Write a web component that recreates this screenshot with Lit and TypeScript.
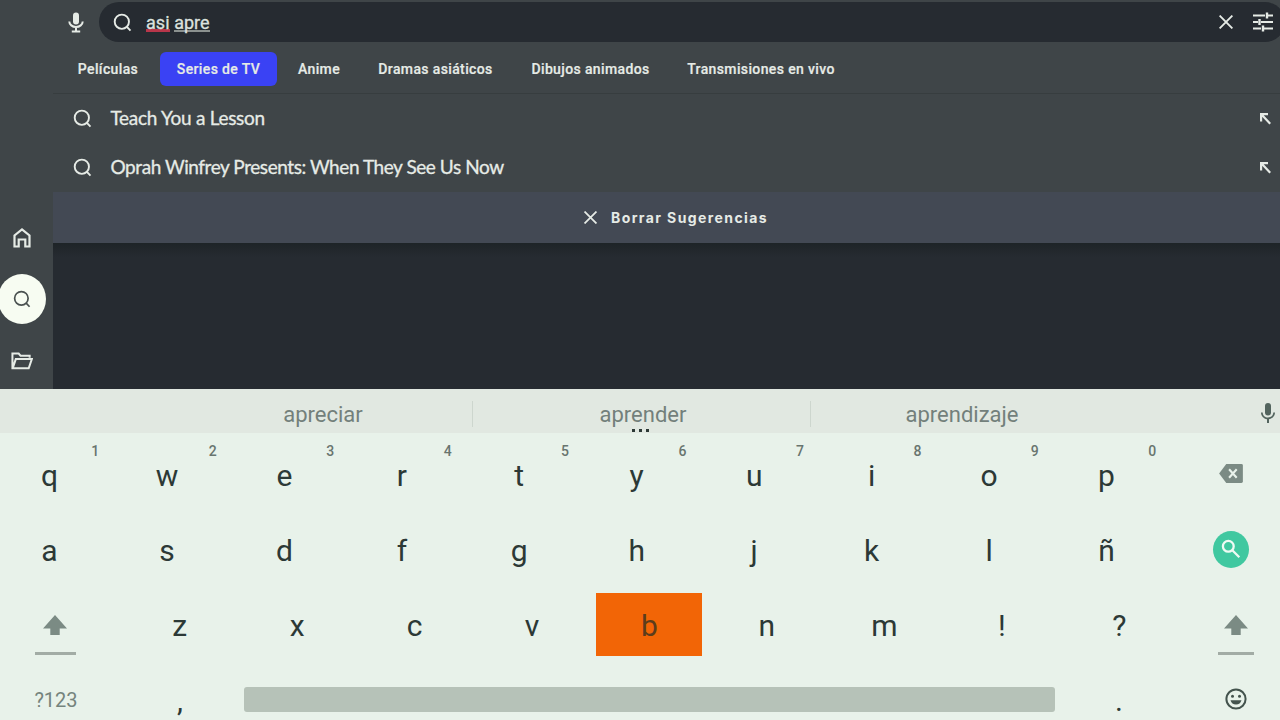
import { LitElement, html, css, nothing } from "lit";
import { customElement } from "lit/decorators.js";

const lens = (size: number, width = 2) => html`<svg width=${size} height=${size} viewBox="0 0 20 20" fill="none" stroke="currentColor" stroke-width=${width}>
  <circle cx="9.3" cy="9.2" r="7.5"></circle><path d="M14.4 14.4 18.4 18.6"></path></svg>`;

const cross = (size: number) => html`<svg width=${size} height=${size} viewBox="0 0 14 14" fill="none" stroke="currentColor" stroke-width="1.9">
  <path d="M.6 .6 13.400 13.400M13.400 .6 .6 13.400"></path></svg>`;

const mic = (w: number, h: number) => html`<svg width=${w} height=${h} viewBox="5 2 14 20" preserveAspectRatio="none" fill="currentColor">
  <path d="M12 14.5a3 3 0 0 0 3-3V5a3 3 0 0 0-6 0v6.500a3 3 0 0 0 3 3z"></path>
  <path d="M17.300 11.500c0 3-2.540 5.100-5.300 5.100s-5.300-2.100-5.300-5.100H5c0 3.410 2.720 6.230 6 6.720V22h2v-3.780c3.280-.48 6-3.300 6-6.720z"></path></svg>`;

const micWithFoot = html`<svg width="16" height="21" viewBox="0 0 16 21" fill="none" stroke="currentColor" stroke-width="2">
  <rect x="5" y=".5" width="6" height="12" rx="3" fill="currentColor" stroke="none"></rect>
  <path d="M1.300 9.500a6.700 5.500 0 0 0 13.400 0M8 15.500v4M3.800 19.400h8.400"></path></svg>`;

const shift = html`<svg class="shift-icon" width="24" height="20" viewBox="0 0 24 20" fill="currentColor"><path d="M12 0 0 13.500h7.300V20h9.400v-6.500H24z"></path></svg>`;

const northWest = html`<svg width="12" height="13" viewBox="0 0 12 13" fill="none" stroke="currentColor" stroke-width="2.200"><path d="M2.100 9.500V2.100H9M2.300 2.300 11.200 11.800"></path></svg>`;

@customElement("app-root")
export class AppRoot extends LitElement {
  static styles = css`
    :host { display: block; width: 1280px; height: 720px; overflow: hidden; font-family: Roboto, sans-serif; }
    * { box-sizing: border-box; }
    svg { display: block; flex: none; }
    .app { display: flex; flex-direction: column; height: 720px; overflow: hidden; }
    .top { display: flex; height: 389px; flex: none; background: #3f4548; color: #e6ebe6; }
    .side { width: 53px; flex: none; display: flex; flex-direction: column; align-items: center; padding: 228px 9px 0 0; }
    .nav { height: 20px; display: flex; align-items: center; }
    .nav.on { width: 48px; height: 50px; margin: 26px 0 27px; border-radius: 50%; background: #f7fcf2; color: #4a5150; justify-content: center; flex: none; }
    .main { width: 1227px; flex: none; display: flex; flex-direction: column; overflow: hidden; }
    .head { height: 42px; padding: 2px 0 0 15px; display: flex; align-items: center; flex: none; }
    .bar { margin-left: 15px; width: 1186px; height: 40px; flex: none; border-radius: 20px; background: #262b31; display: flex; align-items: center; padding-left: 14px; }
    .query { margin-left: 14px; width: 1073px; font-size: 18px; line-height: 24px; color: #dce2df; white-space: pre; padding-top: 2px; letter-spacing: .05px; -webkit-text-stroke: .3px #dce2df; }
    .word { display: inline-block; height: 20px; line-height: 22px; border-bottom: 2px solid #8b918f; }
    .word.bad { border-bottom: 3px solid #b8364a; }
    .tune { margin-left: 20px; }
    .tabs { height: 52px; border-bottom: 1px solid #373d3f; display: flex; align-items: center; padding: 2px 0 0 6px; font-size: 14px; font-weight: 500; letter-spacing: .37px; -webkit-text-stroke: .2px currentColor; flex: none; }
    .tab { height: 34px; display: flex; align-items: center; justify-content: center; border-radius: 6px; white-space: nowrap; }
    .tab.on { background: #3a42f4; }
    .row { height: 49px; display: flex; align-items: center; padding: 0 9px 0 20px; font: 400 19px/24px Lato, sans-serif; flex: none; }
    .row svg { position: relative; top: 0; }
    .title { margin: -2px 0 0 18.500px; flex: 1; white-space: nowrap; letter-spacing: -.43px; -webkit-text-stroke: .3px currentColor; }
    .row.wide .title { letter-spacing: -.28px; }
    .clear { height: 51px; background: #434954; display: flex; align-items: center; padding-left: 531px; gap: 14px; font: 700 14px/20px Inter, sans-serif; letter-spacing: 1.400px; flex: none; }
    .empty { flex: 1; background: linear-gradient(#1e2427, #262b31 14px); }
    .kb { height: 331px; background: #e8f2ea; color: #2c3936; flex: none; }
    .strip { height: 44px; background: #e1e8e1; display: flex; color: #73807b; font-size: 22px; align-items: center; position: relative; }
    .pred { display: flex; justify-content: center; height: 26px; line-height: 27px; border-right: 1px solid #cdd6ce; margin-top: 5px; }
    .pred.last { border: 0; }
    .strip-mic { color: #53645e; margin: 4px 5px 0 auto; }
    .dots { position: absolute; left: 632px; top: 40px; display: flex; gap: 4px; }
    .dot { width: 3px; height: 3px; background: #2c3936; }
    .keys { display: flex; height: 75px; margin-left: -9.200px; }
    .keys.first { margin-top: 3px; height: 75.500px; }
    .key { width: 117.450px; flex: none; display: flex; align-items: center; justify-content: center; position: relative; font-size: 30px; padding-top: 3px; }
    .hint { position: absolute; left: 94.500px; top: 6px; width: 20px; text-align: center; font-size: 14px; font-weight: 500; line-height: 18px; color: #68756f; }
    .action { width: 131px; flex: none; display: flex; align-items: center; justify-content: center; color: #7b8b84; }
    .go { width: 36px; height: 37px; border-radius: 50%; background: #40c8a0; color: #effaf3; display: flex; align-items: center; justify-content: center; }
    .keys.third { margin-left: 0; }
    .shift { width: 121px; padding-right: 11px; flex: none; display: flex; flex-direction: column; align-items: center; color: #7b8b84; }
    .shift.right { width: 102px; padding-right: 0; padding-left: 15px; }
    .shift-icon { margin-top: 28px; }
    .line { width: 41px; height: 3px; background: #a2aca5; margin-top: 17px; flex: none; }
    .right .line { width: 36px; }
    .focus { width: 106px; height: 63px; background: #f26506; display: flex; align-items: center; justify-content: center; padding-top: 3px; color: #5c3c1c; margin-top: -3px; flex: none; }
    .sym { width: 112px; padding-top: 2px; font-size: 20px; display: flex; align-items: center; justify-content: center; color: #75847d; flex: none; }
    .comma { width: 132px; padding: 2px 0 0 4px; }
    .space { width: 811px; height: 25px; border-radius: 3px; background: #b6c2b8; align-self: center; flex: none; }
    .dotkey { width: 128px; }
    .emoji { width: 107px; display: flex; align-items: center; justify-content: center; color: #43534d; }
    .emoji svg { margin-left: 9px; }
    .keys.fourth { margin-left: 0; }
  `;

  private tabs: [string, number][] = [["Películas", 98], ["Series de TV", 117], ["Anime", 84], ["Dramas asiáticos", 149], ["Dibujos animados", 161], ["Transmisiones en vivo", 180]];

  private letters(keys: string, hints = "") {
    return [...keys].map((k, i) => html`<div class="key">${k === "b" ? html`<div class="focus">b</div>` : k}${hints ? html`<span class="hint">${hints[i]}</span>` : nothing}</div>`);
  }

  render() {
    return html`<div class="app">
      <div class="top">
        <nav class="side">
          <div class="nav"><svg width="18" height="20" viewBox="0 0 18 20" fill="none" stroke="currentColor" stroke-width="2.200"><path d="M1.500 18.500V7.500L9 1.500l7.500 6v11h-4.200v-7H5.700v7z"></path></svg></div>
          <div class="nav on">${lens(18, 1.9)}</div>
          <div class="nav"><svg width="22" height="18" viewBox="0 0 23 18" fill="none" stroke="currentColor" stroke-width="2.100"><path d="M19.500 5.500V3.500H10L8 1.200H1.500v15.500h17L21.800 7H5L1.800 16.500"></path></svg></div>
        </nav>
        <div class="main">
          <div class="head">
            ${micWithFoot}
            <div class="bar">${lens(19)}
              <div class="query"><span class="word bad">asi</span> <span class="word">apre</span></div>
              ${cross(14)}
              <svg class="tune" width="20" height="20" viewBox="0 0 20 20" fill="none" stroke="currentColor" stroke-width="2"><path d="M0 3.500H12M15 3.500h5M0 10h5M8 10h12M0 16.500h8M11 16.500h9"></path><path d="M14 .500v6M6.500 7v6M10 13.500v6" stroke-width="2.400"></path></svg>
            </div>
          </div>
          <div class="tabs">${this.tabs.map(([t, w], i) => html`<div class="tab ${t === "Series de TV" ? "on" : ""}" style="width:${w}px;margin-left:${i === 1 ? 3 : 0}px">${t}</div>`)}</div>
          ${["Teach You a Lesson", "Oprah Winfrey Presents: When They See Us Now"].map((t, i) => html`<div class="row ${i ? "" : "wide"}">${lens(19)}<span class="title">${t}</span>${northWest}</div>`)}
          <div class="clear">${cross(13)}<span>Borrar Sugerencias</span></div>
          <div class="empty"></div>
        </div>
      </div>
      <div class="kb">
        <div class="strip">
          <div class="pred" style="width:473px;padding-left:174px">apreciar</div>
          <div class="pred" style="width:338px;padding-left:3px">aprender</div>
          <div class="pred last" style="width:302px">aprendizaje</div>
          <div class="strip-mic">${mic(14, 20)}</div>
          <div class="dots"><i class="dot"></i><i class="dot"></i><i class="dot"></i></div>
        </div>
        <div class="keys first">${this.letters("qwertyuiop", "1234567890")}
          <div class="action"><svg width="24" height="19" viewBox="0 0 25 20"><path d="M7.500 0H23.500Q25 0 25 1.500V18.500Q25 20 23.500 20H7.500L0 10z" fill="currentColor"></path><path d="M10.500 5.500 18.500 14.500M18.500 5.500 10.500 14.500" stroke="#e8f2ea" stroke-width="2.200"></path></svg></div>
        </div>
        <div class="keys">${this.letters("asdfghjklñ")}
          <div class="action"><div class="go"><svg width="20" height="20" viewBox="0 0 20 20" fill="none" stroke="currentColor" stroke-width="2.300"><circle cx="7.300" cy="7.300" r="5.400"></circle><path d="M11.300 11.300 18.300 18.300"></path></svg></div></div>
        </div>
        <div class="keys third">
          <div class="shift">${shift}<div class="line"></div></div>
          ${this.letters("zxcvbnm!?")}
          <div class="shift right">${shift}<div class="line"></div></div>
        </div>
        <div class="keys fourth">
          <div class="sym">?123</div>
          <div class="key comma">,</div>
          <div class="space"></div>
          <div class="key dotkey">.</div>
          <div class="emoji"><svg width="22" height="22" viewBox="0 0 22 22" fill="none"><circle cx="11" cy="11" r="9.600" stroke="currentColor" stroke-width="2"></circle><circle cx="7.500" cy="8.300" r="1.500" fill="currentColor"></circle><circle cx="14.500" cy="8.300" r="1.500" fill="currentColor"></circle><path d="M5.500 12.300h11a5.700 5.700 0 0 1-11 0z" fill="currentColor"></path></svg></div>
        </div>
      </div>
    </div>`;
  }
}
